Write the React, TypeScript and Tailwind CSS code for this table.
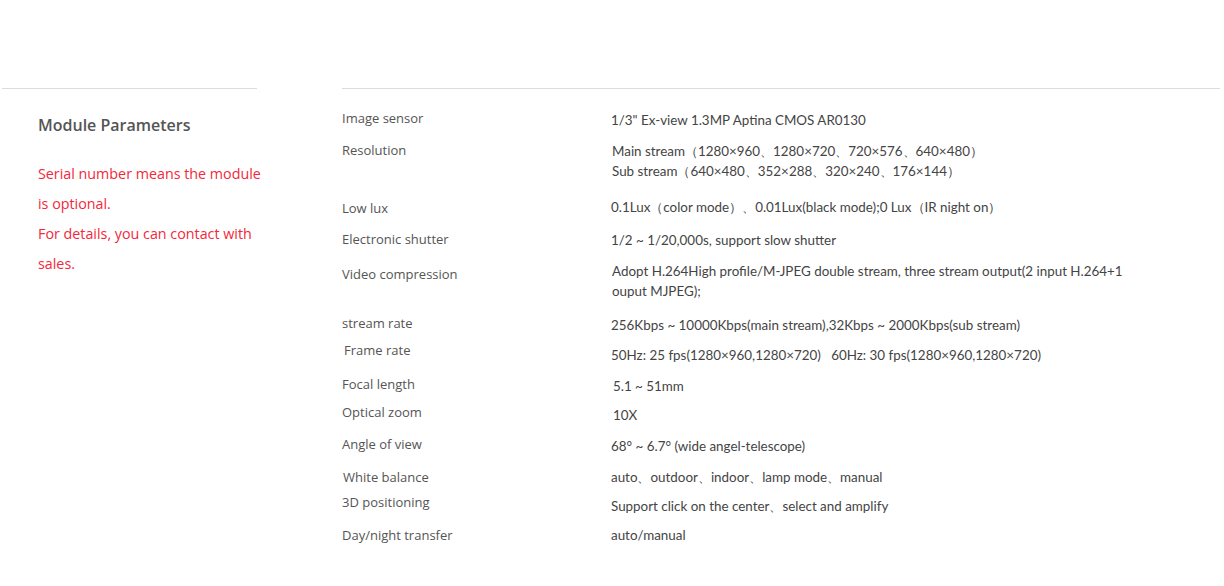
const specs = [
  { label: "Image sensor", value: ["1/3\" Ex-view 1.3MP Aptina CMOS AR0130"], row: "h-[32px]", l: "pt-0 pl-0", v: "pt-[2px] pl-0" },
  { label: "Resolution", value: ["Main stream（1280×960、1280×720、720×576、640×480）", "Sub stream（640×480、352×288、320×240、176×144）"], row: "h-[57px]", l: "pt-0 pl-0", v: "pt-[1px] pl-[1px]" },
  { label: "Low lux", value: ["0.1Lux（color mode）、0.01Lux(black mode);0 Lux（IR night on）"], row: "h-[32px]", l: "pt-[1px] pl-0", v: "pt-0 pl-0" },
  { label: "Electronic shutter", value: ["1/2 ~ 1/20,000s, support slow shutter"], row: "h-[32px]", l: "pt-0 pl-0", v: "pt-[1px] pl-0" },
  { label: "Video compression", value: ["Adopt H.264High profile/M-JPEG double stream, three stream output(2 input H.264+1", "ouput MJPEG);"], row: "h-[52px]", l: "pt-[3px] pl-0", v: "pt-0 pl-[1px]" },
  { label: "stream rate", value: ["256Kbps ~ 10000Kbps(main stream),32Kbps ~ 2000Kbps(sub stream)"], row: "h-[27px]", l: "pt-0 pl-0", v: "pt-[2px] pl-0" },
  { label: "Frame rate", value: ["50Hz: 25 fps(1280×960,1280×720)\u00a0\u00a0\u00a060Hz: 30 fps(1280×960,1280×720)"], row: "h-[34px]", l: "pt-0 pl-[2px]", v: "pt-[5px] pl-0" },
  { label: "Focal length", value: ["5.1 ~ 51mm"], row: "h-[28px]", l: "pt-0 pl-0", v: "pt-[2px] pl-[2px]" },
  { label: "Optical zoom", value: ["10X"], row: "h-[32px]", l: "pt-0 pl-0", v: "pt-[3px] pl-[2px]" },
  { label: "Angle of view", value: ["68° ~ 6.7° (wide angel-telescope)"], row: "h-[33px]", l: "pt-0 pl-0", v: "pt-[2px] pl-0" },
  { label: "White balance", value: ["auto、outdoor、indoor、lamp mode、manual"], row: "h-[25px]", l: "pt-0 pl-[1px]", v: "pt-0 pl-0" },
  { label: "3D positioning", value: ["Support click on the center、select and amplify"], row: "h-[33px]", l: "pt-0 pl-0", v: "pt-[4px] pl-0" },
  { label: "Day/night transfer", value: ["auto/manual"], row: "h-[20px]", l: "pt-0 pl-0", v: "pt-0 pl-0" },
]

export default function App() {
  return (
    <div className="min-h-[586px] bg-white pt-[88px] flex">
      {/* Sidebar */}
      <aside className="ml-[2px] w-[255px] shrink-0 border-t border-[#dcdcdc] pl-[36px] pt-[24px]">
        <h2 className="text-[16px] leading-[24px] font-semibold text-[#555] font-['Open_Sans',sans-serif]">Module Parameters</h2>
        <p className="mt-[22px] whitespace-nowrap text-[14.3px] leading-[30px] text-[#f2283b] font-['Open_Sans',sans-serif]">
          Serial number means the module
          <br />
          is optional.
          <br />
          For details, you can contact with
          <br />
          sales.
        </p>
      </aside>

      {/* Parameter table */}
      <section className="ml-[85px] w-[878px] border-t border-[#dcdcdc] pt-[19px]">
        {specs.map((s) => (
          <div key={s.label} className={`flex ${s.row}`}>
            <div className={`w-[269px] shrink-0 text-[13px] leading-[20px] text-[#555] font-['Open_Sans',sans-serif] ${s.l}`}>
              {s.label}
            </div>
            <div className={`text-[13.4px] leading-[20px] text-[#444] font-['Lato',sans-serif] ${s.v}`}>
              {s.value.map((line) => (
                <div key={line} className="whitespace-nowrap">{line}</div>
              ))}
            </div>
          </div>
        ))}
      </section>
    </div>
  )
}
